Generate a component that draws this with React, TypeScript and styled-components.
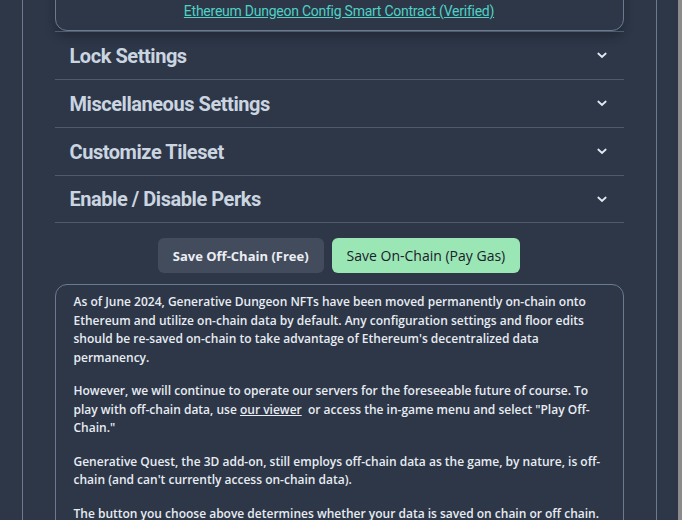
import React from "react";
import styled, { createGlobalStyle } from "styled-components";

const GlobalStyle = createGlobalStyle`
  html, body {
    margin: 0;
    padding: 0;
    background: #2d3748;
    overflow: hidden;
  }
  #root {
    height: 520px;
  }
`;

const Screen = styled.div`
  display: flex;
  height: 520px;
  overflow: hidden;
`;

const Viewport = styled.div`
  flex: 1;
  display: flex;
  justify-content: center;
  overflow: hidden;
`;

const ScrollThumb = styled.div`
  width: 4px;
  background: #8b8b8b;
`;

// page is scrolled: the top of the contract card sits above the fold
const Panel = styled.main`
  width: 635px;
  margin-top: -60px;
  padding: 0 32px;
  border-left: 1px solid #6c7a90;
  border-right: 1px solid #6c7a90;
  box-sizing: border-box;
`;

const ContractCard = styled.section`
  border: 1px solid #6c7a90;
  border-radius: 12px;
  padding: 61px 16px 10px;
  text-align: center;
  box-shadow: 0 6px 10px rgba(16, 20, 30, 0.35);
`;

const ContractLink = styled.a`
  font-family: Roboto, "DejaVu Sans", sans-serif;
  font-size: 14px;
  letter-spacing: -0.25px;
  color: #4fd1c5;
  text-decoration: underline;
`;

const Row = styled.div`
  display: flex;
  align-items: center;
  justify-content: space-between;
  height: 47px;
  padding: 0 17px 0 15px;
  border-top: 1px solid #4e5a6d;
  &:last-child {
    height: 46px;
    border-bottom: 1px solid #4e5a6d;
  }
`;

const RowTitle = styled.span`
  font-family: Roboto, "DejaVu Sans", sans-serif;
  font-weight: 700;
  font-size: 20px;
  color: #cbd5e0;
  letter-spacing: -0.45px;
`;

const Chevron = () => (
  <svg width="10" height="7" viewBox="0 0 10 7" fill="none">
    <path d="M1.3 1.5L5 5L8.7 1.5" stroke="#e2e8f0" strokeWidth="1.8" strokeLinecap="round" />
  </svg>
);

const ButtonBar = styled.div`
  display: flex;
  justify-content: center;
  gap: 8px;
  margin: 15px 0 11px;
`;

const SaveButton = styled.button<{ $primary?: boolean }>`
  height: 35px;
  padding: 0 15px;
  border: none;
  border-radius: 6px;
  font-family: "Open Sans", "Noto Sans", sans-serif;
  font-size: ${(p) => (p.$primary ? "14px" : "13px")};
  font-weight: ${(p) => (p.$primary ? 500 : 700)};
  background: ${(p) => (p.$primary ? "#9ae6b4" : "#434c5c")};
  color: ${(p) => (p.$primary ? "#1a202c" : "#ebeef3")};
`;

const Notice = styled.section`
  border: 1px solid #6c7a90;
  border-radius: 12px;
  padding: 8px 18px 20px 18px;
  font-family: "Open Sans", "Noto Sans", sans-serif;
  font-size: 12px;
  font-weight: 600;
  line-height: 18.5px;
  color: #e8ecf2;
`;

const Para = styled.p`
  margin: 0 0 15px;
`;

const InlineLink = styled.a`
  color: inherit;
  text-decoration: underline;
`;

const sections = [
  "Lock Settings",
  "Miscellaneous Settings",
  "Customize Tileset",
  "Enable / Disable Perks",
];

export default function App() {
  return (
    <>
      <GlobalStyle />
      <Screen>
        <Viewport>
          <Panel>
            <ContractCard>
              <ContractLink href="#">Ethereum Dungeon Config Smart Contract (Verified)</ContractLink>
            </ContractCard>
            <div>
              {sections.map((s) => (
                <Row key={s}>
                  <RowTitle>{s}</RowTitle>
                  <Chevron />
                </Row>
              ))}
            </div>
            <ButtonBar>
              <SaveButton>Save Off-Chain (Free)</SaveButton>
              <SaveButton $primary>Save On-Chain (Pay Gas)</SaveButton>
            </ButtonBar>
            <Notice>
              <Para>
                As of June 2024, Generative Dungeon NFTs have been moved permanently on-chain onto
                Ethereum and utilize on-chain data by default. Any configuration settings and floor edits
                should be re-saved on-chain to take advantage of Ethereum's decentralized data
                permanency.
              </Para>
              <Para>
                However, we will continue to operate our servers for the foreseeable future of course. To
                play with off-chain data, use <InlineLink href="#">our viewer</InlineLink>&nbsp; or access the
                in-game menu and select "Play Off-Chain."
              </Para>
              <Para>
                Generative Quest, the 3D add-on, still employs off-chain data as the game, by nature, is
                off-chain (and can't currently access on-chain data).
              </Para>
              <Para>
                The button you choose above determines whether your data is saved on chain or off chain.
              </Para>
            </Notice>
          </Panel>
        </Viewport>
        <ScrollThumb />
      </Screen>
    </>
  );
}
